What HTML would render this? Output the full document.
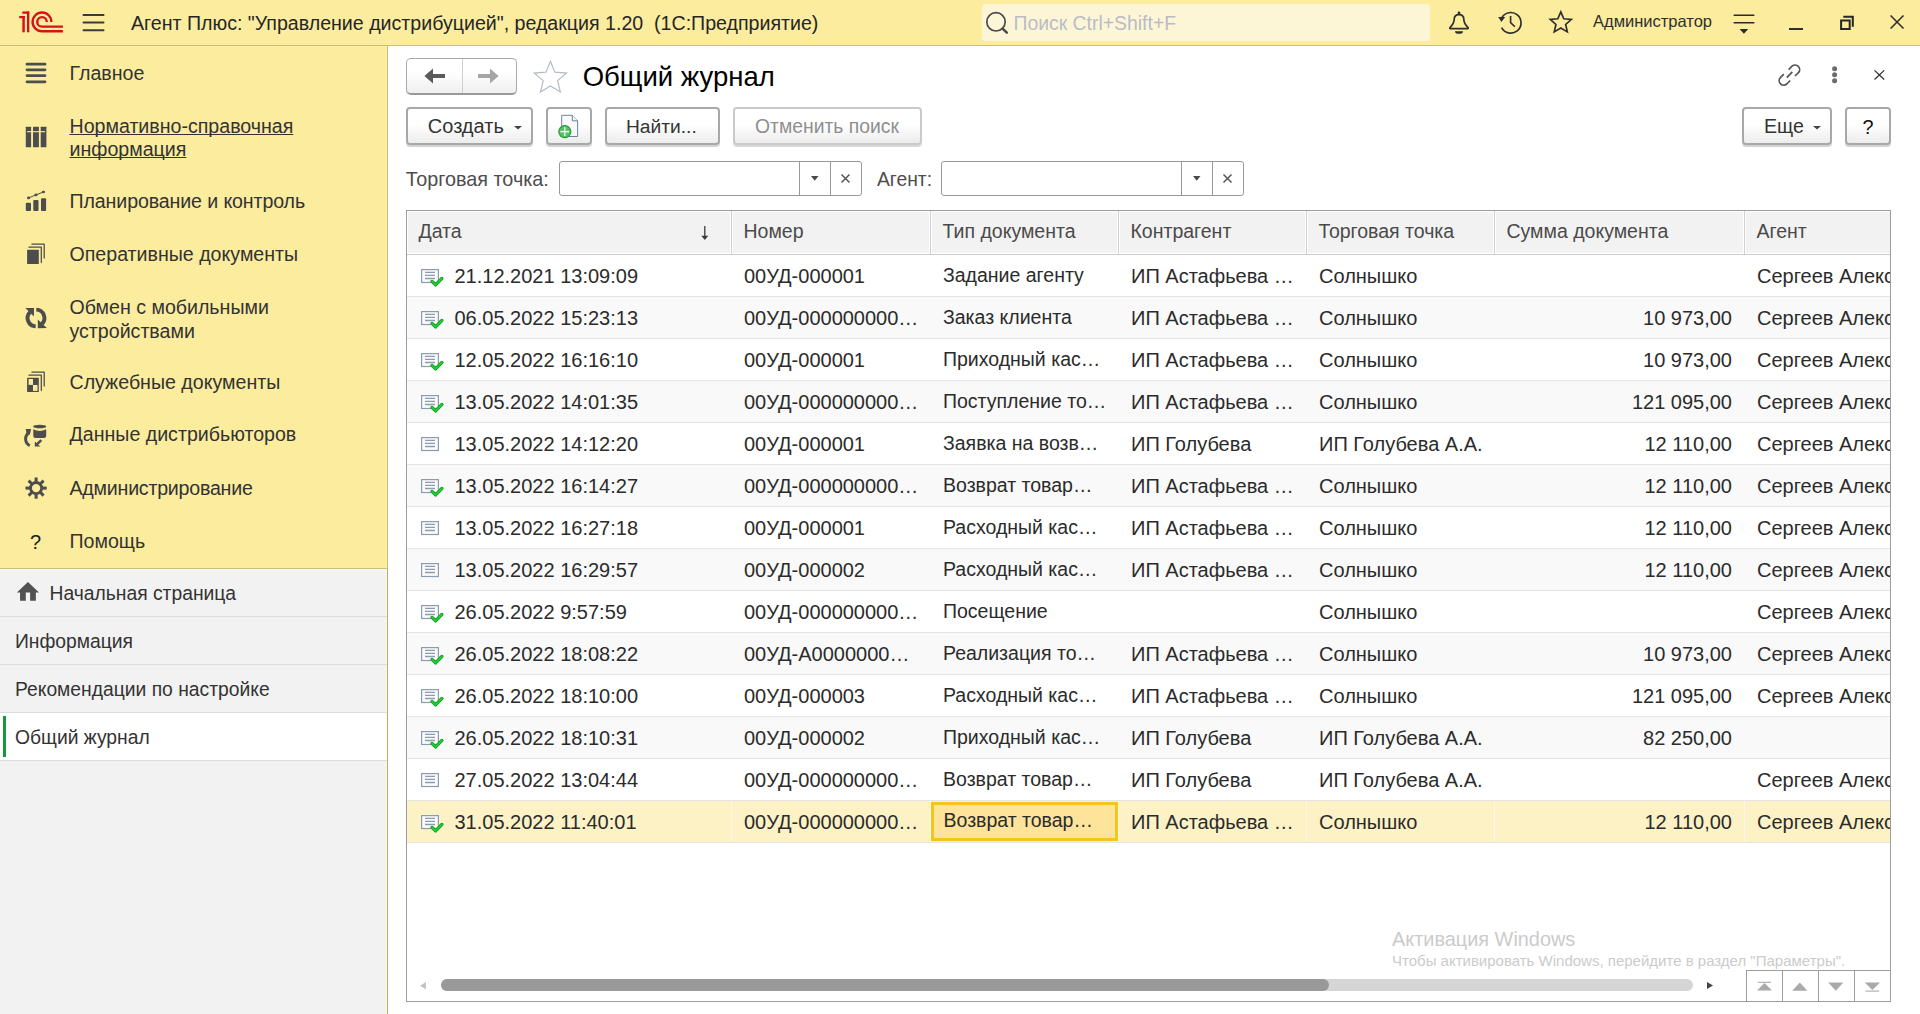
<!DOCTYPE html>
<html><head><meta charset="utf-8">
<style>
*{box-sizing:border-box}
html,body{margin:0;padding:0}
body{width:1920px;height:1014px;overflow:hidden;position:relative;background:#fff;font-family:"Liberation Sans",sans-serif;color:#333}
.a{position:absolute}
.tx{position:absolute;white-space:nowrap;line-height:1}
#top{left:0;top:0;width:1920px;height:46px;background:#fbec9e;border-bottom:1px solid #cdbd78}
#sideY{left:0;top:46px;width:388px;height:523px;background:#fbec9e;border-right:1px solid #cbbd72;border-bottom:1px solid #c9bd7a}
#sideG{left:0;top:569px;width:388px;height:445px;background:#f2f2f2;border-right:1px solid #bcad5c;box-shadow:inset 0 1px 0 #f8f8fb,inset -1px 0 0 #f7f7fa}
.sep{position:absolute;left:0;width:387px;height:1px;background:#dcdcdc}
.si{font-size:19.6px;color:#333}
.btn{position:absolute;border:2px solid #a8a8a8;border-radius:4px;background:linear-gradient(#fff 0%,#fff 45%,#ececec 100%);box-shadow:0 2px 0 #d2d2d2}
.btn1{position:absolute;border:1px solid #a9a9a9;border-bottom:2px solid #9a9a9a;border-radius:5px;background:linear-gradient(#fff 0%,#fff 40%,#efefef 100%)}
.inp{position:absolute;border:1px solid #999;border-radius:3px;background:#fff}
#tbl{left:406px;top:210px;width:1485px;height:792px;border:1px solid #9c9c9c;overflow:hidden;background:#fff}
.hd{position:absolute;top:0;height:43px;background:#f2f2f2;border:1px solid #fff;border-top:1px solid #fff}
.hsep{position:absolute;top:0;width:1px;height:43px;background:#d0d0d0}
.hline{position:absolute;left:0;top:43px;width:1485px;height:1px;background:#cccccc}
.row{position:absolute;left:0;width:1484px;height:42px;border-bottom:1px solid #e4e4e4;background:#fff}
.row.alt{background:#f9f9f9}
.row.sel{background:#fdf2c6}
.c{position:absolute;top:0;height:41px;overflow:hidden}
.c.cur{background:#fde49a;border:3px solid #f6c51c;top:1px;height:39px}
.c.cur .t{top:6px;left:9.5px!important}
.t{position:absolute;top:10.5px;white-space:nowrap;line-height:1;font-size:20px;color:#2b2b2b}
.di{position:absolute;left:14px;top:14px}
.ht{position:absolute;white-space:nowrap;line-height:1;font-size:19.5px;color:#4a4a4a;top:9.5px}
</style></head><body>

<!-- TOP BAR -->
<div id="top" class="a">
  <svg class="a" style="left:16px;top:8px" width="50" height="28" viewBox="16 8 50 28">
    <g fill="#d8101a">
      <rect x="27" y="11.45" width="2.3" height="20.85"/>
      <rect x="22.35" y="11.45" width="6.9" height="2.35"/>
      <rect x="22.35" y="16" width="2.45" height="16.3"/>
      <rect x="19.2" y="16" width="5.6" height="2.2"/>
    </g>
    <g fill="none" stroke="#d8101a" stroke-width="2.4">
      <path d="M46.75 21.9 A4.75 4.75 0 1 0 42 26.65 H62.9"/>
      <path d="M51.4 21.9 A9.4 9.4 0 1 0 42 31.3 H62.9"/>
    </g>
  </svg>
  <svg class="a" style="left:82px;top:13px" width="24" height="20" viewBox="0 0 24 20">
    <g stroke="#3a3a3a" stroke-width="2" stroke-linecap="round"><path d="M1.5 2h20M1.5 9.6h20M1.5 17.3h20"/></g>
  </svg>
  <div class="tx" style="left:131px;top:14px;font-size:19.6px;color:#262626">Агент Плюс: "Управление дистрибуцией", редакция 1.20&nbsp; (1С:Предприятие)</div>
  <div class="a" style="left:982px;top:4px;width:448px;height:37px;background:#fdf6d6;border-radius:3px"></div>
  <svg class="a" style="left:984px;top:10px" width="28" height="28" viewBox="0 0 28 28">
    <circle cx="12" cy="11.8" r="9.2" fill="none" stroke="#4a4a4a" stroke-width="1.7"/>
    <path d="M18.6 18.6 L22.8 22.6" stroke="#4a4a4a" stroke-width="2.6" stroke-linecap="round"/>
  </svg>
  <div class="tx" style="left:1013.5px;top:13.6px;font-size:19.4px;color:#b9bcc6">Поиск Ctrl+Shift+F</div>
  <!-- bell -->
  <svg class="a" style="left:1446px;top:9px" width="26" height="28" viewBox="0 0 26 28">
    <g fill="none" stroke="#2f2f2f" stroke-width="1.7" stroke-linejoin="round">
      <path d="M4.4 19.6 Q3.3 19.6 4.2 18.3 Q8.2 14.3 8.2 10.3 Q8.2 5.6 13 5.6 Q17.8 5.6 17.8 10.3 Q17.8 14.3 21.8 18.3 Q22.7 19.6 21.6 19.6 Z"/>
    </g>
    <circle cx="13" cy="4" r="1.4" fill="#2f2f2f"/>
    <path d="M9 22.2 H17 A4 2.6 0 0 1 9 22.2 Z" fill="#2f2f2f"/>
  </svg>
  <!-- history -->
  <svg class="a" style="left:1494px;top:8px" width="32" height="30" viewBox="1494 8 32 30">
    <path d="M1501.7 17.9 A10.3 10.3 0 1 1 1501.6 27.6" fill="none" stroke="#2f2f2f" stroke-width="1.7"/>
    <path d="M1498.2 17.0 L1505.2 17.0 L1501.4 21.9 Z" fill="#2f2f2f"/>
    <path d="M1510.6 16.0 V22.6 L1514.9 26.8" fill="none" stroke="#2f2f2f" stroke-width="1.6"/>
  </svg>
  <!-- star -->
  <svg class="a" style="left:1544px;top:6px" width="34" height="32" viewBox="1544 6 34 32">
    <path d="M1560.80 11.80 L1563.80 18.77 L1571.36 19.47 L1565.65 24.48 L1567.32 31.88 L1560.80 28.00 L1554.28 31.88 L1555.95 24.48 L1550.24 19.47 L1557.80 18.77 Z" fill="none" stroke="#2f2f2f" stroke-width="1.7" stroke-linejoin="miter"/>
  </svg>
  <div class="tx" style="left:1593px;top:12.6px;font-size:16.5px;color:#2f2f2f">Администратор</div>
  <!-- filter icon -->
  <svg class="a" style="left:1731px;top:12px" width="26" height="24" viewBox="0 0 26 24">
    <path d="M3.2 3.2h19.6M3.2 10.8h19.6" stroke="#2a2a2a" stroke-width="1.6" stroke-linecap="round"/>
    <path d="M8.6 17.1 H17.2 L12.9 21.8 Z" fill="#2a2a2a"/>
  </svg>
  <div class="a" style="left:1789px;top:27.5px;width:14px;height:2.2px;background:#2f2f2f"></div>
  <svg class="a" style="left:1838px;top:14px" width="18" height="18" viewBox="0 0 18 18">
    <path d="M5.3 2.75 H14.8 V12.7 M3.1 6.4 H11.7 V14.9 H3.1 Z" fill="none" stroke="#262626" stroke-width="2"/>
  </svg>
  <svg class="a" style="left:1887px;top:13px" width="20" height="20" viewBox="0 0 20 20">
    <path d="M3.6 2.5 L16.5 15.5 M16.5 2.5 L3.6 15.5" stroke="#2f2f2f" stroke-width="1.6"/>
  </svg>
</div>

<!-- SIDEBAR -->
<div id="sideY" class="a"></div>
<div id="sideG" class="a">
  <div class="sep" style="top:47px"></div>
  <div class="sep" style="top:95px"></div>
  <div class="sep" style="top:143px"></div>
  <div class="a" style="left:0;top:144px;width:387px;height:47px;background:#fff"></div>
  <div class="a" style="left:3px;top:147px;width:3px;height:41px;background:#159a3b"></div>
  <div class="sep" style="top:191px"></div>
</div>
<!-- sidebar icons -->
<svg class="a" style="left:24px;top:62px" width="24" height="22" viewBox="0 0 24 22">
  <g stroke="#4d4d4d" stroke-width="2.8" stroke-linecap="round"><path d="M3 2.2h18M3 7.8h18M3 13.6h18M3 19.8h18"/></g>
</svg>
<svg class="a" style="left:24px;top:125px" width="24" height="24" viewBox="0 0 24 24">
  <g fill="#4d4d4d"><rect x="1.8" y="1.7" width="5.3" height="20.6" rx="0.6"/><rect x="9.0" y="1.7" width="5.9" height="20.6" rx="0.6"/><rect x="16.7" y="1.7" width="5.7" height="20.6" rx="0.6"/></g>
  <path d="M3 6.7 H21" stroke="#fbec9e" stroke-width="1.1"/>
</svg>
<svg class="a" style="left:20px;top:185px" width="32" height="30" viewBox="20 185 32 30">
  <g fill="#4d4d4d"><rect x="25.8" y="202.8" width="5.2" height="8.2" rx="1"/><rect x="33.3" y="199.9" width="5.2" height="11.1" rx="1"/><rect x="41" y="198.3" width="5.1" height="12.7" rx="1"/>
  <ellipse cx="28.6" cy="197.9" rx="1.6" ry="1.3"/><ellipse cx="36" cy="194.9" rx="1.6" ry="1.3"/><ellipse cx="43.4" cy="192" rx="1.6" ry="1.3"/></g>
  <path d="M28.6 197.9 L36 194.9 L43.4 192" fill="none" stroke="#4d4d4d" stroke-width="1"/>
</svg>
<svg class="a" style="left:20px;top:238px" width="32" height="30" viewBox="20 238 32 30">
  <g fill="none" stroke="#4d4d4d" stroke-width="1.25" stroke-linecap="round" stroke-linejoin="round"><path d="M31.9 244.2 H44.2 V258"/><path d="M29 247.2 H41.3 V262.5"/></g>
  <rect x="27.1" y="249.8" width="11.7" height="14.2" rx="0.5" fill="#4d4d4d"/>
</svg>
<svg class="a" style="left:20px;top:302px" width="32" height="32" viewBox="20 302 32 32">
  <g fill="none" stroke="#4d4d4d" stroke-width="3.9"><path d="M35.7 326.4 A8.4 8.4 0 0 1 30.06 312.06"/><path d="M36.3 309.6 A8.4 8.4 0 0 1 41.94 323.94"/></g>
  <g fill="#4d4d4d"><path d="M25.4 308 L34 308 L33.9 316.6 Z"/><path d="M37.8 319.5 L37.8 328.2 L46.8 327.9 Z"/></g>
</svg>
<svg class="a" style="left:20px;top:366px" width="32" height="30" viewBox="20 366 32 30">
  <g fill="none" stroke="#4d4d4d" stroke-width="1.25" stroke-linecap="round" stroke-linejoin="round"><path d="M31.9 372.2 H44.2 V386"/><path d="M29 375.2 H41.3 V390.5"/></g>
  <rect x="27.1" y="377.8" width="11.7" height="14.2" rx="0.5" fill="#4d4d4d"/>
  <rect x="28.6" y="379" width="4.4" height="5.9" fill="#fbec9e"/><rect x="33" y="385" width="4.5" height="5.9" fill="#fbec9e"/>
</svg>
<svg class="a" style="left:20px;top:420px" width="32" height="32" viewBox="20 420 32 32">
  <g fill="#4d4d4d">
    <ellipse cx="39.7" cy="426.5" rx="6.6" ry="1.8"/>
    <path d="M33.3 429.2 Q39.7 432.6 46.2 429.2 V436 Q46.2 438.1 44 438.1 H35.5 Q33.3 438.1 33.3 436 Z"/>
    <path d="M25.6 429.1 L31.1 429.1 L29.9 434.6 L26.6 433.6 Z"/>
    <path d="M34.8 441.4 L34.8 446.6 L40.3 446.6 Z"/>
  </g>
  <g fill="none" stroke="#4d4d4d">
    <path d="M29.2 432.6 A7.4 7.4 0 0 0 29.8 445.6" stroke-width="3"/>
    <path d="M36.6 444.6 L41.3 440.1" stroke-width="2.6"/>
  </g>
</svg>
<svg class="a" style="left:20px;top:472px" width="32" height="32" viewBox="20 472 32 32">
  <circle cx="36.1" cy="488.1" r="5.6" fill="none" stroke="#4d4d4d" stroke-width="2.8"/>
  <g fill="#4d4d4d"><rect x="34.6" y="477.5" width="3" height="4.4" transform="rotate(0 36.1 488.1)"/><rect x="34.6" y="477.5" width="3" height="4.4" transform="rotate(45 36.1 488.1)"/><rect x="34.6" y="477.5" width="3" height="4.4" transform="rotate(90 36.1 488.1)"/><rect x="34.6" y="477.5" width="3" height="4.4" transform="rotate(135 36.1 488.1)"/><rect x="34.6" y="477.5" width="3" height="4.4" transform="rotate(180 36.1 488.1)"/><rect x="34.6" y="477.5" width="3" height="4.4" transform="rotate(225 36.1 488.1)"/><rect x="34.6" y="477.5" width="3" height="4.4" transform="rotate(270 36.1 488.1)"/><rect x="34.6" y="477.5" width="3" height="4.4" transform="rotate(315 36.1 488.1)"/></g>
</svg>
<div class="tx" style="left:30px;top:531.5px;font-size:20px;color:#1a1a1a">?</div>
<svg class="a" style="left:10px;top:572px" width="40" height="40" viewBox="10 572 40 40">
  <path d="M27.95 581.9 L39 592.6 L35.85 592.6 L35.85 600.8 L30.1 600.8 L30.1 592.6 L25.8 592.6 L25.8 600.8 L20.05 600.8 L20.05 592.6 L16.9 592.6 Z" fill="#525252"/>
</svg>

<div class="tx si" style="left:69.5px;top:64px">Главное</div>
<div class="tx si" style="left:69.5px;top:117.2px;text-decoration:underline;text-decoration-skip-ink:none;text-underline-offset:1px">Нормативно-справочная</div>
<div class="tx si" style="left:69.5px;top:139.7px;text-decoration:underline;text-decoration-skip-ink:none;text-underline-offset:1px">информация</div>
<div class="tx si" style="left:69.5px;top:192.3px;letter-spacing:-0.11px">Планирование и контроль</div>
<div class="tx si" style="left:69.5px;top:245.4px">Оперативные документы</div>
<div class="tx si" style="left:69.5px;top:298.1px">Обмен с мобильными</div>
<div class="tx si" style="left:69.5px;top:321.8px">устройствами</div>
<div class="tx si" style="left:69.5px;top:372.7px">Служебные документы</div>
<div class="tx si" style="left:69.5px;top:425px">Данные дистрибьюторов</div>
<div class="tx si" style="left:69.5px;top:478.6px;letter-spacing:-0.22px">Администрирование</div>
<div class="tx si" style="left:69.5px;top:531.9px">Помощь</div>

<div class="tx si" style="left:49.5px;top:583.5px;font-size:19.3px">Начальная страница</div>
<div class="tx si" style="left:15px;top:632.3px;font-size:19.3px">Информация</div>
<div class="tx si" style="left:15px;top:680.3px;font-size:19.3px">Рекомендации по настройке</div>
<div class="tx si" style="left:15px;top:728.3px;font-size:19.3px">Общий журнал</div>

<!-- MAIN -->
<div class="btn1" style="left:406px;top:58px;width:111px;height:37px"></div>
<div class="a" style="left:462px;top:59px;width:1px;height:34px;background:#cfcfcf"></div>
<svg class="a" style="left:422px;top:66px" width="26" height="20" viewBox="0 0 26 20">
  <path d="M2.4 10 L11 2.6 V8.1 H23 V11.9 H11 V17.4 Z" fill="#5a5a5a"/>
</svg>
<svg class="a" style="left:475px;top:66px" width="26" height="20" viewBox="0 0 26 20">
  <path d="M23.6 10 L15 2.6 V8.1 H3 V11.9 H15 V17.4 Z" fill="#a6a6a6"/>
</svg>
<svg class="a" style="left:528px;top:56px" width="44" height="40" viewBox="528 56 44 40">
  <path d="M550.40 61.30 L554.87 72.15 L566.57 73.05 L557.63 80.65 L560.39 92.05 L550.40 85.90 L540.41 92.05 L543.17 80.65 L534.23 73.05 L545.93 72.15 Z" fill="none" stroke="#b4bcc6" stroke-width="1.2"/>
</svg>
<div class="tx" style="left:582.7px;top:63px;font-size:27.5px;color:#000">Общий журнал</div>

<svg class="a" style="left:1775px;top:61px" width="28" height="28" viewBox="1775 61 28 28">
  <g fill="none" stroke="#555" stroke-width="1.7">
    <path d="M1783.8 74.2 L1780.3 77.7 A4.5 4.5 0 0 0 1786.7 84.0 L1790.2 80.5"/>
    <path d="M1788.67 69.62 L1792.06 66.23 A4.5 4.5 0 0 1 1798.42 72.59 L1795.03 75.98"/>
    <path d="M1786.8 77.7 L1792.3 71.9"/>
  </g>
</svg>
<svg class="a" style="left:1830px;top:65px" width="10" height="20" viewBox="0 0 10 20">
  <g fill="#6c6c6c"><circle cx="4.6" cy="3.8" r="2.5"/><circle cx="4.6" cy="9.8" r="2.5"/><circle cx="4.6" cy="15.8" r="2.5"/></g>
</svg>
<svg class="a" style="left:1872px;top:68px" width="14" height="14" viewBox="0 0 14 14">
  <path d="M2.5 2.4 L12.2 11.5 M12.2 2.4 L2.5 11.5" stroke="#333" stroke-width="1.3"/>
</svg>

<!-- toolbar -->
<div class="btn" style="left:406px;top:107px;width:127px;height:38px"></div>
<div class="tx" style="left:427.8px;top:116px;font-size:20px;color:#333">Создать</div>
<svg class="a" style="left:513px;top:125px" width="10" height="6" viewBox="0 0 10 6"><path d="M1 1 H9 L5 4.6 Z" fill="#444"/></svg>
<div class="btn" style="left:546px;top:107px;width:46px;height:38px"></div>
<svg class="a" style="left:555px;top:113px" width="28" height="28" viewBox="0 0 28 28">
  <path d="M6.7 2.3 H17.3 L22.6 7.8 V23.5 H6.7 Z" fill="#fafafa" stroke="#70839c" stroke-width="1"/>
  <path d="M17.3 2.3 V7.8 H22.6" fill="#f4f6f8" stroke="#70839c" stroke-width="1"/>
  <circle cx="9.8" cy="18.6" r="6.6" fill="#1f9a30"/>
  <circle cx="9.8" cy="18.6" r="5.5" fill="#58c066"/>
  <path d="M9.8 14.2 V23 M5.4 18.6 H14.2" stroke="#fff" stroke-width="1.2"/>
</svg>
<div class="btn" style="left:605px;top:107px;width:115px;height:38px"></div>
<div class="tx" style="left:626px;top:117.3px;font-size:19.2px;color:#333">Найти...</div>
<div class="btn" style="left:733px;top:107px;width:189px;height:38px;border-color:#cacaca;box-shadow:0 2px 0 #d9d9d9"></div>
<div class="tx" style="left:755px;top:117.2px;font-size:19.35px;color:#8f8f8f">Отменить поиск</div>

<div class="btn" style="left:1742px;top:107px;width:90px;height:38px"></div>
<div class="tx" style="left:1764px;top:117px;font-size:19.6px;color:#333">Еще</div>
<svg class="a" style="left:1812px;top:125px" width="10" height="6" viewBox="0 0 10 6"><path d="M1 1 H9 L5 4.6 Z" fill="#444"/></svg>
<div class="btn" style="left:1845px;top:107px;width:46px;height:38px"></div>
<div class="tx" style="left:1862.5px;top:117.5px;font-size:19.8px;color:#111">?</div>

<!-- filters -->
<div class="tx" style="left:405.7px;top:170px;font-size:19.8px;color:#4d4d4d">Торговая точка:</div>
<div class="inp" style="left:559px;top:161px;width:303px;height:35px"></div>
<div class="a" style="left:799px;top:162px;width:1px;height:33px;background:#999"></div>
<div class="a" style="left:830px;top:162px;width:1px;height:33px;background:#999"></div>
<svg class="a" style="left:810px;top:175px" width="10" height="7" viewBox="0 0 10 7"><path d="M1 1 H8.5 L4.75 5.8 Z" fill="#4a4a4a"/></svg>
<svg class="a" style="left:840px;top:173px" width="11" height="11" viewBox="0 0 11 11"><path d="M1.5 1.5 L9.5 9.5 M9.5 1.5 L1.5 9.5" stroke="#555" stroke-width="1.5"/></svg>
<div class="tx" style="left:877px;top:170px;font-size:19.3px;color:#4d4d4d">Агент:</div>
<div class="inp" style="left:941px;top:161px;width:303px;height:35px"></div>
<div class="a" style="left:1181px;top:162px;width:1px;height:33px;background:#999"></div>
<div class="a" style="left:1212px;top:162px;width:1px;height:33px;background:#999"></div>
<svg class="a" style="left:1192px;top:175px" width="10" height="7" viewBox="0 0 10 7"><path d="M1 1 H8.5 L4.75 5.8 Z" fill="#4a4a4a"/></svg>
<svg class="a" style="left:1222px;top:173px" width="11" height="11" viewBox="0 0 11 11"><path d="M1.5 1.5 L9.5 9.5 M9.5 1.5 L1.5 9.5" stroke="#555" stroke-width="1.5"/></svg>

<!-- TABLE -->
<div id="tbl" class="a">
  <div class="hd" style="left:0;width:324px"><span class="ht" style="left:10.5px">Дата</span>
    <svg class="a" style="left:292px;top:13px" width="10" height="17" viewBox="0 0 10 17"><path d="M4.8 1 V13" stroke="#3a3a3a" stroke-width="1.3"/><path d="M1.3 10.8 L8.3 10.8 L4.8 14.9 Z" fill="#3a3a3a"/></svg>
  </div>
  <div class="hsep" style="left:324px"></div>
  <div class="hd" style="left:325px;width:198px"><span class="ht" style="left:10.5px">Номер</span></div>
  <div class="hsep" style="left:523px"></div>
  <div class="hd" style="left:524px;width:187px"><span class="ht" style="left:10.5px">Тип документа</span></div>
  <div class="hsep" style="left:711px"></div>
  <div class="hd" style="left:712px;width:187px"><span class="ht" style="left:10.5px">Контрагент</span></div>
  <div class="hsep" style="left:899px"></div>
  <div class="hd" style="left:900px;width:187px"><span class="ht" style="left:10.5px">Торговая точка</span></div>
  <div class="hsep" style="left:1087px"></div>
  <div class="hd" style="left:1088px;width:249px"><span class="ht" style="left:10.5px">Сумма документа</span></div>
  <div class="hsep" style="left:1337px"></div>
  <div class="hd" style="left:1338px;width:147px"><span class="ht" style="left:10.5px">Агент</span></div>
  <div class="hline"></div>
<div class="row" style="top:44px"><div class="c" style="left:0;width:325px"><svg class="di" width="24" height="20" viewBox="0 0 24 20"><rect x="0.6" y="0.6" width="16.8" height="12.9" fill="#fbfbfb" stroke="#8c9cb0" stroke-width="1.2"/><path d="M4 3.4h10M4 6.4h10M4 9.5h10" stroke="#8c9cb0" stroke-width="1.3"/><path d="M11 12.4 L14.6 15.9 L20.9 9.4" fill="none" stroke="#0b9a1b" stroke-width="3.3" stroke-linecap="round" stroke-linejoin="round"/><path d="M11 12.4 L14.6 15.9 L20.9 9.4" fill="none" stroke="#25cf36" stroke-width="1.7" stroke-linecap="round" stroke-linejoin="round"/></svg><span class="t" style="left:47.5px">21.12.2021 13:09:09</span></div><div class="c" style="left:325px;width:199px"><span class="t" style="left:12px">00УД-000001</span></div><div class="c" style="left:524px;width:188px"><span class="t" style="left:12px;font-size:19.5px">Задание агенту</span></div><div class="c" style="left:712px;width:188px"><span class="t" style="left:12px">ИП Астафьева …</span></div><div class="c" style="left:900px;width:188px"><span class="t" style="left:12px">Солнышко</span></div><div class="c" style="left:1088px;width:250px"><span class="t r" style="right:13px"></span></div><div class="c" style="left:1338px;width:146px"><span class="t" style="left:12px">Сергеев Алексей</span></div></div>
<div class="row alt" style="top:86px"><div class="c" style="left:0;width:325px"><svg class="di" width="24" height="20" viewBox="0 0 24 20"><rect x="0.6" y="0.6" width="16.8" height="12.9" fill="#fbfbfb" stroke="#8c9cb0" stroke-width="1.2"/><path d="M4 3.4h10M4 6.4h10M4 9.5h10" stroke="#8c9cb0" stroke-width="1.3"/><path d="M11 12.4 L14.6 15.9 L20.9 9.4" fill="none" stroke="#0b9a1b" stroke-width="3.3" stroke-linecap="round" stroke-linejoin="round"/><path d="M11 12.4 L14.6 15.9 L20.9 9.4" fill="none" stroke="#25cf36" stroke-width="1.7" stroke-linecap="round" stroke-linejoin="round"/></svg><span class="t" style="left:47.5px">06.05.2022 15:23:13</span></div><div class="c" style="left:325px;width:199px"><span class="t" style="left:12px">00УД-000000000…</span></div><div class="c" style="left:524px;width:188px"><span class="t" style="left:12px;font-size:19.5px">Заказ клиента</span></div><div class="c" style="left:712px;width:188px"><span class="t" style="left:12px">ИП Астафьева …</span></div><div class="c" style="left:900px;width:188px"><span class="t" style="left:12px">Солнышко</span></div><div class="c" style="left:1088px;width:250px"><span class="t r" style="right:13px">10 973,00</span></div><div class="c" style="left:1338px;width:146px"><span class="t" style="left:12px">Сергеев Алексей</span></div></div>
<div class="row" style="top:128px"><div class="c" style="left:0;width:325px"><svg class="di" width="24" height="20" viewBox="0 0 24 20"><rect x="0.6" y="0.6" width="16.8" height="12.9" fill="#fbfbfb" stroke="#8c9cb0" stroke-width="1.2"/><path d="M4 3.4h10M4 6.4h10M4 9.5h10" stroke="#8c9cb0" stroke-width="1.3"/><path d="M11 12.4 L14.6 15.9 L20.9 9.4" fill="none" stroke="#0b9a1b" stroke-width="3.3" stroke-linecap="round" stroke-linejoin="round"/><path d="M11 12.4 L14.6 15.9 L20.9 9.4" fill="none" stroke="#25cf36" stroke-width="1.7" stroke-linecap="round" stroke-linejoin="round"/></svg><span class="t" style="left:47.5px">12.05.2022 16:16:10</span></div><div class="c" style="left:325px;width:199px"><span class="t" style="left:12px">00УД-000001</span></div><div class="c" style="left:524px;width:188px"><span class="t" style="left:12px;font-size:19.5px">Приходный кас…</span></div><div class="c" style="left:712px;width:188px"><span class="t" style="left:12px">ИП Астафьева …</span></div><div class="c" style="left:900px;width:188px"><span class="t" style="left:12px">Солнышко</span></div><div class="c" style="left:1088px;width:250px"><span class="t r" style="right:13px">10 973,00</span></div><div class="c" style="left:1338px;width:146px"><span class="t" style="left:12px">Сергеев Алексей</span></div></div>
<div class="row alt" style="top:170px"><div class="c" style="left:0;width:325px"><svg class="di" width="24" height="20" viewBox="0 0 24 20"><rect x="0.6" y="0.6" width="16.8" height="12.9" fill="#fbfbfb" stroke="#8c9cb0" stroke-width="1.2"/><path d="M4 3.4h10M4 6.4h10M4 9.5h10" stroke="#8c9cb0" stroke-width="1.3"/><path d="M11 12.4 L14.6 15.9 L20.9 9.4" fill="none" stroke="#0b9a1b" stroke-width="3.3" stroke-linecap="round" stroke-linejoin="round"/><path d="M11 12.4 L14.6 15.9 L20.9 9.4" fill="none" stroke="#25cf36" stroke-width="1.7" stroke-linecap="round" stroke-linejoin="round"/></svg><span class="t" style="left:47.5px">13.05.2022 14:01:35</span></div><div class="c" style="left:325px;width:199px"><span class="t" style="left:12px">00УД-000000000…</span></div><div class="c" style="left:524px;width:188px"><span class="t" style="left:12px;font-size:19.5px">Поступление то…</span></div><div class="c" style="left:712px;width:188px"><span class="t" style="left:12px">ИП Астафьева …</span></div><div class="c" style="left:900px;width:188px"><span class="t" style="left:12px">Солнышко</span></div><div class="c" style="left:1088px;width:250px"><span class="t r" style="right:13px">121 095,00</span></div><div class="c" style="left:1338px;width:146px"><span class="t" style="left:12px">Сергеев Алексей</span></div></div>
<div class="row" style="top:212px"><div class="c" style="left:0;width:325px"><svg class="di" width="24" height="20" viewBox="0 0 24 20"><rect x="0.6" y="0.6" width="16.8" height="12.9" fill="#fbfbfb" stroke="#8c9cb0" stroke-width="1.2"/><path d="M4 3.4h10M4 6.4h10M4 9.5h10" stroke="#8c9cb0" stroke-width="1.3"/></svg><span class="t" style="left:47.5px">13.05.2022 14:12:20</span></div><div class="c" style="left:325px;width:199px"><span class="t" style="left:12px">00УД-000001</span></div><div class="c" style="left:524px;width:188px"><span class="t" style="left:12px;font-size:19.5px">Заявка на возв…</span></div><div class="c" style="left:712px;width:188px"><span class="t" style="left:12px">ИП Голубева</span></div><div class="c" style="left:900px;width:188px"><span class="t" style="left:12px">ИП Голубева А.А.</span></div><div class="c" style="left:1088px;width:250px"><span class="t r" style="right:13px">12 110,00</span></div><div class="c" style="left:1338px;width:146px"><span class="t" style="left:12px">Сергеев Алексей</span></div></div>
<div class="row alt" style="top:254px"><div class="c" style="left:0;width:325px"><svg class="di" width="24" height="20" viewBox="0 0 24 20"><rect x="0.6" y="0.6" width="16.8" height="12.9" fill="#fbfbfb" stroke="#8c9cb0" stroke-width="1.2"/><path d="M4 3.4h10M4 6.4h10M4 9.5h10" stroke="#8c9cb0" stroke-width="1.3"/><path d="M11 12.4 L14.6 15.9 L20.9 9.4" fill="none" stroke="#0b9a1b" stroke-width="3.3" stroke-linecap="round" stroke-linejoin="round"/><path d="M11 12.4 L14.6 15.9 L20.9 9.4" fill="none" stroke="#25cf36" stroke-width="1.7" stroke-linecap="round" stroke-linejoin="round"/></svg><span class="t" style="left:47.5px">13.05.2022 16:14:27</span></div><div class="c" style="left:325px;width:199px"><span class="t" style="left:12px">00УД-000000000…</span></div><div class="c" style="left:524px;width:188px"><span class="t" style="left:12px;font-size:19.5px">Возврат товар…</span></div><div class="c" style="left:712px;width:188px"><span class="t" style="left:12px">ИП Астафьева …</span></div><div class="c" style="left:900px;width:188px"><span class="t" style="left:12px">Солнышко</span></div><div class="c" style="left:1088px;width:250px"><span class="t r" style="right:13px">12 110,00</span></div><div class="c" style="left:1338px;width:146px"><span class="t" style="left:12px">Сергеев Алексей</span></div></div>
<div class="row" style="top:296px"><div class="c" style="left:0;width:325px"><svg class="di" width="24" height="20" viewBox="0 0 24 20"><rect x="0.6" y="0.6" width="16.8" height="12.9" fill="#fbfbfb" stroke="#8c9cb0" stroke-width="1.2"/><path d="M4 3.4h10M4 6.4h10M4 9.5h10" stroke="#8c9cb0" stroke-width="1.3"/></svg><span class="t" style="left:47.5px">13.05.2022 16:27:18</span></div><div class="c" style="left:325px;width:199px"><span class="t" style="left:12px">00УД-000001</span></div><div class="c" style="left:524px;width:188px"><span class="t" style="left:12px;font-size:19.5px">Расходный кас…</span></div><div class="c" style="left:712px;width:188px"><span class="t" style="left:12px">ИП Астафьева …</span></div><div class="c" style="left:900px;width:188px"><span class="t" style="left:12px">Солнышко</span></div><div class="c" style="left:1088px;width:250px"><span class="t r" style="right:13px">12 110,00</span></div><div class="c" style="left:1338px;width:146px"><span class="t" style="left:12px">Сергеев Алексей</span></div></div>
<div class="row alt" style="top:338px"><div class="c" style="left:0;width:325px"><svg class="di" width="24" height="20" viewBox="0 0 24 20"><rect x="0.6" y="0.6" width="16.8" height="12.9" fill="#fbfbfb" stroke="#8c9cb0" stroke-width="1.2"/><path d="M4 3.4h10M4 6.4h10M4 9.5h10" stroke="#8c9cb0" stroke-width="1.3"/></svg><span class="t" style="left:47.5px">13.05.2022 16:29:57</span></div><div class="c" style="left:325px;width:199px"><span class="t" style="left:12px">00УД-000002</span></div><div class="c" style="left:524px;width:188px"><span class="t" style="left:12px;font-size:19.5px">Расходный кас…</span></div><div class="c" style="left:712px;width:188px"><span class="t" style="left:12px">ИП Астафьева …</span></div><div class="c" style="left:900px;width:188px"><span class="t" style="left:12px">Солнышко</span></div><div class="c" style="left:1088px;width:250px"><span class="t r" style="right:13px">12 110,00</span></div><div class="c" style="left:1338px;width:146px"><span class="t" style="left:12px">Сергеев Алексей</span></div></div>
<div class="row" style="top:380px"><div class="c" style="left:0;width:325px"><svg class="di" width="24" height="20" viewBox="0 0 24 20"><rect x="0.6" y="0.6" width="16.8" height="12.9" fill="#fbfbfb" stroke="#8c9cb0" stroke-width="1.2"/><path d="M4 3.4h10M4 6.4h10M4 9.5h10" stroke="#8c9cb0" stroke-width="1.3"/><path d="M11 12.4 L14.6 15.9 L20.9 9.4" fill="none" stroke="#0b9a1b" stroke-width="3.3" stroke-linecap="round" stroke-linejoin="round"/><path d="M11 12.4 L14.6 15.9 L20.9 9.4" fill="none" stroke="#25cf36" stroke-width="1.7" stroke-linecap="round" stroke-linejoin="round"/></svg><span class="t" style="left:47.5px">26.05.2022 9:57:59</span></div><div class="c" style="left:325px;width:199px"><span class="t" style="left:12px">00УД-000000000…</span></div><div class="c" style="left:524px;width:188px"><span class="t" style="left:12px;font-size:19.5px">Посещение</span></div><div class="c" style="left:712px;width:188px"><span class="t" style="left:12px"></span></div><div class="c" style="left:900px;width:188px"><span class="t" style="left:12px">Солнышко</span></div><div class="c" style="left:1088px;width:250px"><span class="t r" style="right:13px"></span></div><div class="c" style="left:1338px;width:146px"><span class="t" style="left:12px">Сергеев Алексей</span></div></div>
<div class="row alt" style="top:422px"><div class="c" style="left:0;width:325px"><svg class="di" width="24" height="20" viewBox="0 0 24 20"><rect x="0.6" y="0.6" width="16.8" height="12.9" fill="#fbfbfb" stroke="#8c9cb0" stroke-width="1.2"/><path d="M4 3.4h10M4 6.4h10M4 9.5h10" stroke="#8c9cb0" stroke-width="1.3"/><path d="M11 12.4 L14.6 15.9 L20.9 9.4" fill="none" stroke="#0b9a1b" stroke-width="3.3" stroke-linecap="round" stroke-linejoin="round"/><path d="M11 12.4 L14.6 15.9 L20.9 9.4" fill="none" stroke="#25cf36" stroke-width="1.7" stroke-linecap="round" stroke-linejoin="round"/></svg><span class="t" style="left:47.5px">26.05.2022 18:08:22</span></div><div class="c" style="left:325px;width:199px"><span class="t" style="left:12px">00УД-А0000000…</span></div><div class="c" style="left:524px;width:188px"><span class="t" style="left:12px;font-size:19.5px">Реализация то…</span></div><div class="c" style="left:712px;width:188px"><span class="t" style="left:12px">ИП Астафьева …</span></div><div class="c" style="left:900px;width:188px"><span class="t" style="left:12px">Солнышко</span></div><div class="c" style="left:1088px;width:250px"><span class="t r" style="right:13px">10 973,00</span></div><div class="c" style="left:1338px;width:146px"><span class="t" style="left:12px">Сергеев Алексей</span></div></div>
<div class="row" style="top:464px"><div class="c" style="left:0;width:325px"><svg class="di" width="24" height="20" viewBox="0 0 24 20"><rect x="0.6" y="0.6" width="16.8" height="12.9" fill="#fbfbfb" stroke="#8c9cb0" stroke-width="1.2"/><path d="M4 3.4h10M4 6.4h10M4 9.5h10" stroke="#8c9cb0" stroke-width="1.3"/><path d="M11 12.4 L14.6 15.9 L20.9 9.4" fill="none" stroke="#0b9a1b" stroke-width="3.3" stroke-linecap="round" stroke-linejoin="round"/><path d="M11 12.4 L14.6 15.9 L20.9 9.4" fill="none" stroke="#25cf36" stroke-width="1.7" stroke-linecap="round" stroke-linejoin="round"/></svg><span class="t" style="left:47.5px">26.05.2022 18:10:00</span></div><div class="c" style="left:325px;width:199px"><span class="t" style="left:12px">00УД-000003</span></div><div class="c" style="left:524px;width:188px"><span class="t" style="left:12px;font-size:19.5px">Расходный кас…</span></div><div class="c" style="left:712px;width:188px"><span class="t" style="left:12px">ИП Астафьева …</span></div><div class="c" style="left:900px;width:188px"><span class="t" style="left:12px">Солнышко</span></div><div class="c" style="left:1088px;width:250px"><span class="t r" style="right:13px">121 095,00</span></div><div class="c" style="left:1338px;width:146px"><span class="t" style="left:12px">Сергеев Алексей</span></div></div>
<div class="row alt" style="top:506px"><div class="c" style="left:0;width:325px"><svg class="di" width="24" height="20" viewBox="0 0 24 20"><rect x="0.6" y="0.6" width="16.8" height="12.9" fill="#fbfbfb" stroke="#8c9cb0" stroke-width="1.2"/><path d="M4 3.4h10M4 6.4h10M4 9.5h10" stroke="#8c9cb0" stroke-width="1.3"/><path d="M11 12.4 L14.6 15.9 L20.9 9.4" fill="none" stroke="#0b9a1b" stroke-width="3.3" stroke-linecap="round" stroke-linejoin="round"/><path d="M11 12.4 L14.6 15.9 L20.9 9.4" fill="none" stroke="#25cf36" stroke-width="1.7" stroke-linecap="round" stroke-linejoin="round"/></svg><span class="t" style="left:47.5px">26.05.2022 18:10:31</span></div><div class="c" style="left:325px;width:199px"><span class="t" style="left:12px">00УД-000002</span></div><div class="c" style="left:524px;width:188px"><span class="t" style="left:12px;font-size:19.5px">Приходный кас…</span></div><div class="c" style="left:712px;width:188px"><span class="t" style="left:12px">ИП Голубева</span></div><div class="c" style="left:900px;width:188px"><span class="t" style="left:12px">ИП Голубева А.А.</span></div><div class="c" style="left:1088px;width:250px"><span class="t r" style="right:13px">82 250,00</span></div><div class="c" style="left:1338px;width:146px"><span class="t" style="left:12px"></span></div></div>
<div class="row" style="top:548px"><div class="c" style="left:0;width:325px"><svg class="di" width="24" height="20" viewBox="0 0 24 20"><rect x="0.6" y="0.6" width="16.8" height="12.9" fill="#fbfbfb" stroke="#8c9cb0" stroke-width="1.2"/><path d="M4 3.4h10M4 6.4h10M4 9.5h10" stroke="#8c9cb0" stroke-width="1.3"/></svg><span class="t" style="left:47.5px">27.05.2022 13:04:44</span></div><div class="c" style="left:325px;width:199px"><span class="t" style="left:12px">00УД-000000000…</span></div><div class="c" style="left:524px;width:188px"><span class="t" style="left:12px;font-size:19.5px">Возврат товар…</span></div><div class="c" style="left:712px;width:188px"><span class="t" style="left:12px">ИП Голубева</span></div><div class="c" style="left:900px;width:188px"><span class="t" style="left:12px">ИП Голубева А.А.</span></div><div class="c" style="left:1088px;width:250px"><span class="t r" style="right:13px"></span></div><div class="c" style="left:1338px;width:146px"><span class="t" style="left:12px">Сергеев Алексей</span></div></div>
<div class="row alt sel" style="top:590px"><div class="c" style="left:0;width:325px"><svg class="di" width="24" height="20" viewBox="0 0 24 20"><rect x="0.6" y="0.6" width="16.8" height="12.9" fill="#fbfbfb" stroke="#8c9cb0" stroke-width="1.2"/><path d="M4 3.4h10M4 6.4h10M4 9.5h10" stroke="#8c9cb0" stroke-width="1.3"/><path d="M11 12.4 L14.6 15.9 L20.9 9.4" fill="none" stroke="#0b9a1b" stroke-width="3.3" stroke-linecap="round" stroke-linejoin="round"/><path d="M11 12.4 L14.6 15.9 L20.9 9.4" fill="none" stroke="#25cf36" stroke-width="1.7" stroke-linecap="round" stroke-linejoin="round"/></svg><span class="t" style="left:47.5px">31.05.2022 11:40:01</span></div><div class="c" style="left:325px;width:199px"><span class="t" style="left:12px">00УД-000000000…</span></div><div class="c cur" style="left:524px;width:187px"><span class="t" style="left:13px;font-size:19.5px">Возврат товар…</span></div><div class="c" style="left:712px;width:188px"><span class="t" style="left:12px">ИП Астафьева …</span></div><div class="c" style="left:900px;width:188px"><span class="t" style="left:12px">Солнышко</span></div><div class="c" style="left:1088px;width:250px"><span class="t r" style="right:13px">12 110,00</span></div><div class="c" style="left:1338px;width:146px"><span class="t" style="left:12px">Сергеев Алексей</span></div><div class="a" style="left:324px;top:0;width:1px;height:41px;background:#fdf8e6"></div><div class="a" style="left:523px;top:0;width:1px;height:41px;background:#fdf8e6"></div><div class="a" style="left:711px;top:0;width:1px;height:41px;background:#fdf8e6"></div><div class="a" style="left:899px;top:0;width:1px;height:41px;background:#fdf8e6"></div><div class="a" style="left:1087px;top:0;width:1px;height:41px;background:#fdf8e6"></div><div class="a" style="left:1337px;top:0;width:1px;height:41px;background:#fdf8e6"></div></div>
  <!-- scrollbar -->
  <svg class="a" style="left:12px;top:770px" width="8" height="10" viewBox="0 0 8 10"><path d="M7 1 V8.5 L1 4.75 Z" fill="#c4c4c4"/></svg>
  <div class="a" style="left:34px;top:768px;width:1252px;height:12px;border-radius:6px;background:#d5d5d5"></div>
  <div class="a" style="left:34px;top:768px;width:888px;height:12px;border-radius:6px;background:#999"></div>
  <svg class="a" style="left:1299px;top:770px" width="8" height="10" viewBox="0 0 8 10"><path d="M1 1 V8 L7 4.5 Z" fill="#444"/></svg>
</div>
<!-- bottom nav buttons -->
<div class="a" style="left:1746px;top:970px;width:145px;height:32px;border:1px solid #9c9c9c;background:#fff"></div>
<div class="a" style="left:1782px;top:970px;width:1px;height:32px;background:#9c9c9c"></div>
<div class="a" style="left:1818px;top:970px;width:1px;height:32px;background:#9c9c9c"></div>
<div class="a" style="left:1854px;top:970px;width:1px;height:32px;background:#9c9c9c"></div>
<svg class="a" style="left:1756px;top:980px" width="18" height="13" viewBox="0 0 18 13"><path d="M2 2.3 H15" stroke="#aaa" stroke-width="1.1"/><path d="M1 10.6 L8.5 3.0 L16 10.6 Z" fill="#aaa"/></svg>
<svg class="a" style="left:1791px;top:980px" width="18" height="13" viewBox="0 0 18 13"><path d="M1.2 10.8 L8.8 2.6 L16.4 10.8 Z" fill="#aaa"/></svg>
<svg class="a" style="left:1827px;top:980px" width="18" height="13" viewBox="0 0 18 13"><path d="M1.2 2.5 L8.8 10.8 L16.4 2.5 Z" fill="#aaa"/></svg>
<svg class="a" style="left:1863px;top:980px" width="18" height="13" viewBox="0 0 18 13"><path d="M1.7 2.5 L9.4 10 L17 2.5 Z" fill="#aaa"/><path d="M2.5 11.1 H16.2" stroke="#aaa" stroke-width="1.1"/></svg>

<!-- windows watermark -->
<div class="tx" style="left:1392px;top:930px;font-size:19.9px;color:#cbcbcb">Активация Windows</div>
<div class="tx" style="left:1392px;top:953px;font-size:15px;color:#cbcbcb">Чтобы активировать Windows, перейдите в раздел "Параметры".</div>

</body></html>
